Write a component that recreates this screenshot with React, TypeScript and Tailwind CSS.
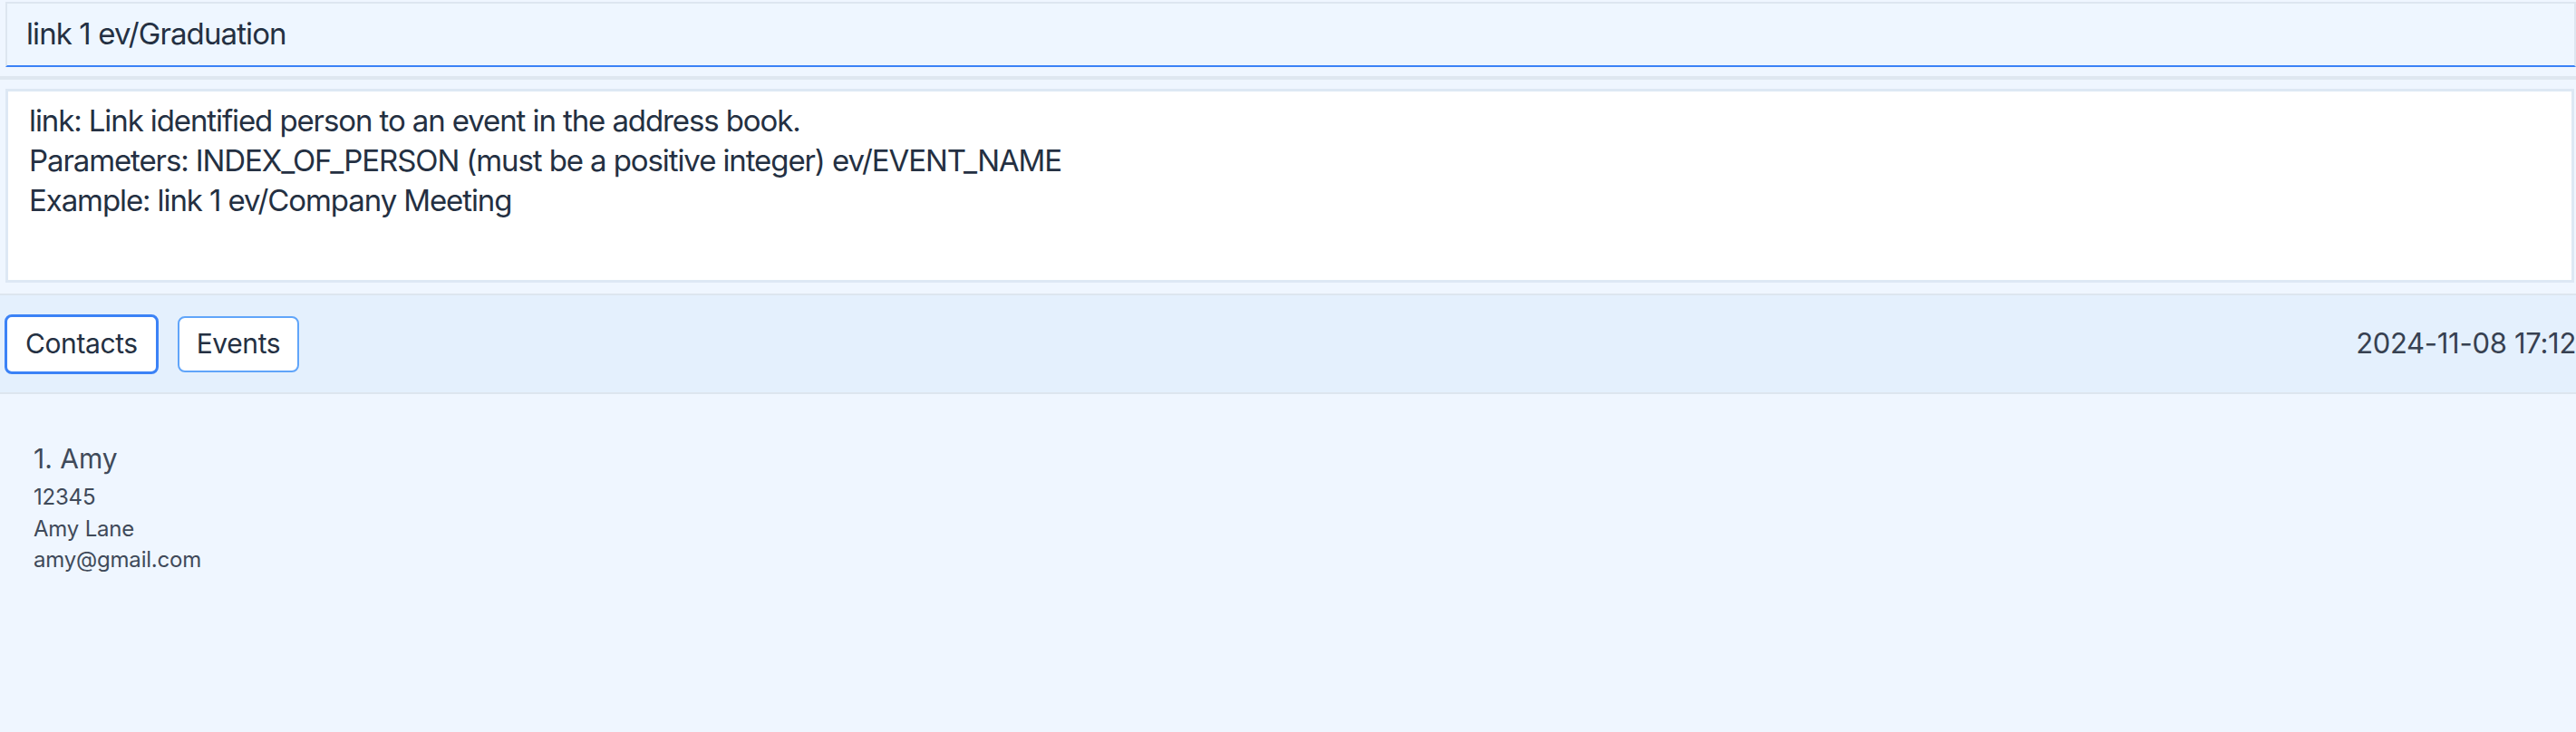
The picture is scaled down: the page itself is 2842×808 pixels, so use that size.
const person = {
  index: 1,
  name: "Amy",
  phone: "12345",
  address: "Amy Lane",
  email: "amy@gmail.com"
};

const feedback = [
  "link: Link identified person to an event in the address book.",
  "Parameters: INDEX_OF_PERSON (must be a positive integer) ev/EVENT_NAME",
  "Example: link 1 ev/Company Meeting"
];

export default function App() {
  return (
    <div className="h-[808px] w-full overflow-hidden bg-[#eff6ff] font-['Inter','Noto_Sans',sans-serif] text-[#1e293b]">
      {/* command box */}
      <div className="pl-[6px] pt-[2px]">
        <div className="flex h-[72px] items-center border-2 border-[#dde6f0] border-b-[#3b82f6] bg-[#eef6ff] px-[21px] text-[33px] tracking-[-0.9px] text-[#243042]">
          link 1 ev/Graduation
        </div>
      </div>

      <div className="mt-[10px] h-[4px] bg-[#dfe7f0]" />

      {/* result display */}
      <div className="mt-[10px] pl-[6px] pr-[2px]">
        <div className="h-[214px] border-[3px] border-[#dde8f4] bg-white px-[23px] pt-[10px] text-[33px] leading-[44px] tracking-[-1.1px] text-[#243042]">
          {feedback.map((line) => (
            <div key={line}>{line}</div>
          ))}
        </div>
      </div>

      {/* tabs */}
      <div className="mt-[12px] flex h-[111px] items-center gap-[21px] overflow-hidden border-y-2 border-[#dde6ef] bg-[#e4f0fd] pl-[5px]">
        <button className="h-[66px] rounded-[8px] border-[3px] border-[#3b82f6] bg-white px-[20px] text-[30px] tracking-[-0.4px] text-[#243042]">
          Contacts
        </button>
        <button className="h-[62px] rounded-[8px] border-2 border-[#60a5fa] bg-white px-[19px] text-[30px] tracking-[-0.4px] text-[#243042]">
          Events
        </button>
        <span className="ml-auto shrink-0 whitespace-nowrap text-[31px] tracking-[-0.3px] text-[#374151]">
          2024-11-08 17:12
        </span>
      </div>

      {/* person list */}
      <div className="px-[37px] pt-[52px] text-[#3f4a5a]">
        <div className="text-[30px] leading-[38px]">
          {person.index}. {person.name}
        </div>
        <div className="mt-[7px] text-[24px] leading-[34.5px] tracking-[-0.2px]">
          <div>{person.phone}</div>
          <div>{person.address}</div>
          <div>{person.email}</div>
        </div>
      </div>
    </div>
  );
}
